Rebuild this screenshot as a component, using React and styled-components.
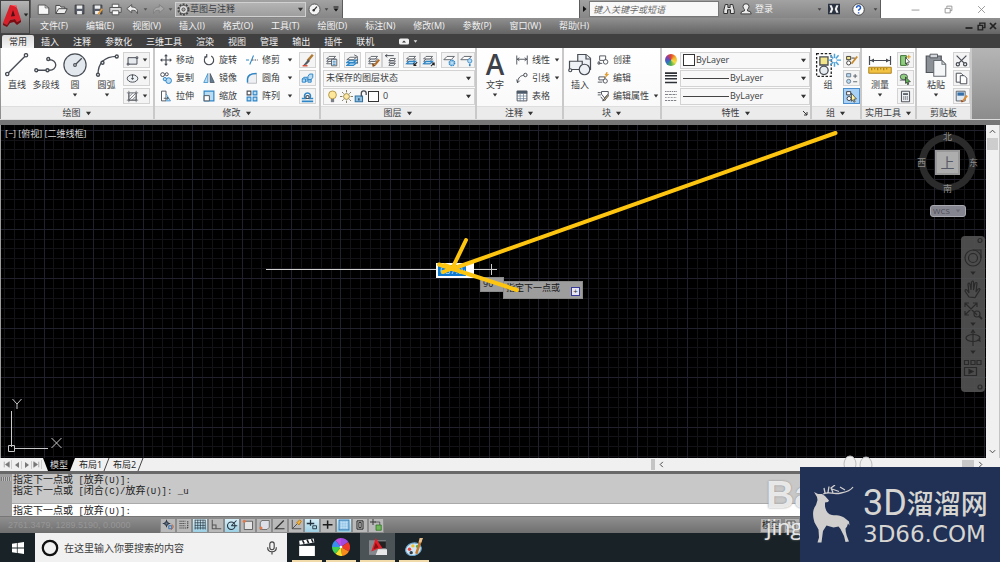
import React from "react";
import styled, { createGlobalStyle, css } from "styled-components";

const GlobalStyle = createGlobalStyle`
  *, *::before, *::after { box-sizing: border-box; }
  body { margin: 0; background: #000; }
  body, button, input, select {
    font-family: "Open Sans", "Noto Sans CJK SC", sans-serif;
    font-size: 9px;
    line-height: 12px;
  }
  button { border: 0; padding: 0; background: none; color: inherit; cursor: default; }
  svg { display: block; flex: none; }
`;

/* ---------- icons ---------- */
const K = "#484d55";
const B = "#2f86c6";
const L = "#b9dcf3";

const sheets = (
  <g fill="#fff" stroke={K}>
    <path d="M2 12l3-3h8l-3 3z" />
    <path d="M2 9l3-3h8l-3 3z" />
    <path d="M2 6l3-3h8l-3 3z" />
  </g>
);

const ICONS = {
  line: <g fill="#fff" stroke={K} strokeWidth=".9"><path d="M1.500 14L14 1.500" /><circle cx="1.500" cy="14" r="1.100" /><circle cx="14" cy="1.500" r="1.100" /></g>,
  pline: <g fill="none" stroke={K} strokeWidth=".9"><path d="M1.500 11.500h9a4 3.500 0 0 0 0-7" /><g fill="#fff"><circle cx="1.500" cy="11.500" r="1" /><circle cx="9" cy="11.500" r="1" /><circle cx="9.500" cy="4" r="1" /></g></g>,
  circle: <g fill="#e3e8ee" stroke={K} strokeWidth=".8"><circle cx="8" cy="8" r="7.400" /><path d="M8 8l4.500-4.500" /><circle cx="8" cy="8" r=".9" fill="#fff" /></g>,
  arc: <g fill="none" stroke={K} strokeWidth=".9"><path d="M2 14.500C2 7 6 2.500 14.500 2.300" /><g fill="#fff"><circle cx="2" cy="14.500" r="1" /><circle cx="5" cy="6.500" r="1" /><circle cx="14.500" cy="2.300" r="1" /></g></g>,
  rect: <g fill="#e6e9ee" stroke={K} strokeWidth="1.200"><path d="M2.500 4.500h11v8h-11z" /><path d="M1.500 11.500h2v2h-2zM12.500 3.500h2v2h-2z" fill="#fff" /></g>,
  ellipse: <g fill="#eef1f4" stroke={K} strokeWidth="1.200"><ellipse cx="8" cy="8" rx="6.500" ry="4.500" /><circle cx="8" cy="8" r="1" fill={K} /><path d="M8 3v3" /></g>,
  hatch: <g fill="none" stroke={K}><path d="M3.500 3.500h9v9h-9z" /><path d="M1 3.500h2M13 3.500h2M1 12.500h14M3.500 1v14M12.500 1v14M4 8l4-4M4 12l8-8M8 12l4-4" strokeWidth=".8" /></g>,
  move: <g stroke={K} strokeWidth="1.600" fill={K}><path d="M8 2v12M2 8h12" /><path d="M8 0l2.500 3h-5zM8 16l2.500-3h-5zM0 8l3-2.500v5zM16 8l-3-2.500v5z" stroke="none" /></g>,
  rotate: <g fill="none" stroke={K} strokeWidth="1.500"><path d="M5 2.700a6.200 6.200 0 1 0 6 0" /><path d="M5 0v4H1.500" /></g>,
  trim: <g fill="none" strokeWidth="1.400"><path d="M0 8h4M10 2L5 14" stroke={B} /><path d="M8 8h2M11.500 8h2M15 8h1" stroke={K} /></g>,
  copy: <g strokeWidth="1.300"><g fill="#fff" stroke={K}><circle cx="3.500" cy="3.500" r="2.600" /><circle cx="9" cy="3" r="2" /></g><g fill={L} stroke={B}><circle cx="11.500" cy="11.500" r="3.800" /><circle cx="6.500" cy="9.500" r="2.200" /></g></g>,
  mirror: <g strokeWidth="1"><path d="M6.500 2v12H1z" fill={L} stroke={B} /><path d="M9.500 2v12H15z" fill="#5f7d96" stroke={K} /></g>,
  fillet: <g><path d="M2 15V9q0-7 12-7v13z" fill="#eef0f3" stroke="#a9adb3" /><path d="M2 14V9q1-7 12-7" fill="none" stroke={B} strokeWidth="2" /></g>,
  stretch: <g><path d="M2 1.500h6v13H2z" fill="#fff" stroke={K} strokeWidth="1.200" /><path d="M8 5l6 9.500H8" fill={L} stroke={B} /><path d="M5 11h6M9 9l2 2-2 2" fill="none" stroke={K} strokeWidth="1.200" /></g>,
  scale: <g><path d="M1.500 1.500h13v13h-13z" fill={L} stroke={B} strokeWidth="1.600" /><path d="M1.500 7.500h7v7h-7z" fill="#fff" stroke={K} strokeWidth="1.200" /></g>,
  array: <g strokeWidth="1.500"><path d="M1.500 1.500h5v5h-5z" fill="#fff" stroke={K} /><path d="M9.500 1.500h5v5h-5zM1.500 9.500h5v5h-5zM9.500 9.500h5v5h-5z" fill={L} stroke={B} /></g>,
  brush: <g><path d="M14.500 1L8 8.500" stroke="#b07a35" strokeWidth="3" /><path d="M9 6.500l2 2-4 4.500-4.500 1z" fill="#54585f" /><path d="M2 14.500h6" stroke="#d03b25" strokeWidth="1.600" /></g>,
  explode: <g fill={L} stroke={B} strokeWidth="1.200"><path d="M1.500 8.500l2-2h4v4l-2 2h-4zM8.500 5.500l2-3h4v4l-2 3h-4zM1.500 8.500h4v4M8.500 9.500h4v3h-4z" /></g>,
  offset: <g fill="none" strokeWidth="1.400"><path d="M1 14h14M1 10.500h4c-4-9 10-9 6 0h4" stroke={B} strokeWidth="2" /><path d="M6.500 10.500c-2.500-5 5.500-5 3 0z" stroke={K} /></g>,
  layerprops: <g>{sheets}<path d="M8 6.500h6.500v8H8z" fill="#e7edf3" stroke={K} /><path d="M9.500 9h3.500M9.500 11h3.500M9.500 13h3.500" stroke={B} /></g>,
  layerblue: <g fill={L} stroke={K}><path d="M1 14l4-3h8l-4 3zM1 10.500l4-3h8l-4 3z" stroke={B} strokeWidth="1.500" /><path d="M1 7l4-3h8l-4 3z" fill="#fff" /><path d="M10 1l4 2v9" fill="none" /></g>,
  layermatch: <g>{sheets}<path d="M15 7l-5 6" stroke="#b46a20" strokeWidth="2.500" /><path d="M6 11l5 3-4 2z" fill="#8a4c14" /></g>,
  layerprev: <g><g fill="#fff" stroke={K}><path d="M6 14l2-2.500h6L12 14zM6 11l2-2.500h6L12 11zM6 8l2-2.500h6L12 8z" /></g><path d="M12 2H2M4 .5L1.500 2 4 4" fill="none" stroke={K} strokeWidth="1.200" /></g>,
  layeriso: <g>{sheets}<path d="M2 12l3-3h8l-3 3z" fill={L} stroke={B} strokeWidth="1.500" /><path d="M15 10l-4 4M11 11v3h3" stroke="#222" fill="none" strokeWidth="1.300" /></g>,
  layeruniso: <g>{sheets}<path d="M2 12l3-3h8l-3 3z" fill={L} stroke={B} strokeWidth="1.500" /><path d="M11 15l4-4M12 11h3v3" stroke="#222" fill="none" strokeWidth="1.300" /></g>,
  layerfreeze: <g><path d="M1 7l4-4h9l-4 4z" fill="#fff" stroke={K} /><circle cx="11" cy="11" r="3.200" fill={L} stroke={B} strokeWidth="2" strokeDasharray="1.700 .8" /></g>,
  layeroff: <g><path d="M1 7l4-4h9l-4 4z" fill="#fff" stroke={K} /><circle cx="12" cy="8.500" r="2.600" fill={L} stroke={B} /><path d="M11 12h2v3h-2z" fill={B} /></g>,
  bulb: <g><circle cx="8" cy="6" r="4.800" fill="#fde79a" stroke="#a98a32" /><path d="M6 11h4v4H6z" fill="#7b7f86" /></g>,
  sun: <g><circle cx="8" cy="8" r="3.600" fill="#fbe7a0" stroke="#8d7a3e" /><path d="M8 0v3M8 13v3M0 8h3M13 8h3M2.500 2.500l2 2M11.500 11.500l2 2M13.500 2.500l-2 2M4.500 11.500l-2 2" stroke="#6d6243" /></g>,
  lock: <g><path d="M1.500 7.500h9v7h-9z" fill="#8cc0e4" stroke="#2c6f9e" strokeWidth="1.300" /><path d="M9 8V4q0-3 3-3t3 3v2" fill="none" stroke={K} strokeWidth="1.600" /><path d="M6 10v3" stroke="#234" strokeWidth="1.500" /></g>,
  linear: <g fill="none" stroke={K} strokeWidth="1.200"><path d="M1 2v12M15 2v12M1.500 7h13" /><path d="M4.500 5L1.500 7l3 2M11.500 5l3 2-3 2" /></g>,
  leader: <g fill="none" stroke={K} strokeWidth="1.300"><path d="M2 14C3 7 6 5 10 4.500" /><circle cx="12.500" cy="4" r="2.300" /><path d="M1 10l1 4.500 3-3" /></g>,
  table: <g><path d="M1.500 1.500h13v13h-13z" fill="#fff" stroke={K} strokeWidth="1.200" /><path d="M1 1h14v4H1z" fill="#4d5a6a" /><path d="M1 8h14M1 11.500h14M5.500 5v10M10 5v10" stroke="#6f8399" /></g>,
  insert: <g fill="#eef1f5" stroke={K} strokeWidth=".8"><path d="M6.500 1H12l3 2.500V11H6.500z" /><path d="M12 1v3h3" /><path d="M1 5.500h8.500V11H1z" /><circle cx="11" cy="11" r="3.500" /><circle cx="1.500" cy="11.500" r="1" fill="#fff" /></g>,
  create: <g fill="#fff" stroke={K} strokeWidth="1.200"><path d="M3.500 2.500h8v6h-8zM1 12.500h6" /><circle cx="11.500" cy="10.500" r="3" /><path d="M1.500 10.500h2v3h-2z" /></g>,
  editblk: <g fill="#fff" stroke={K} strokeWidth="1.200"><path d="M2.500 6.500h8v4h-8zM1 13.500h6" /><circle cx="11" cy="12" r="2.800" /><path d="M13.500 0l-3 4h2l-2 4 5-5h-2.500z" fill="#f6a623" stroke="#c97c0c" strokeWidth=".6" /></g>,
  attr: <g fill="#fff" stroke={K} strokeWidth="1.200"><path d="M1 3.500h4M1 6.500h4M6 2h9v3.500l-5 5-4-5z" /><path d="M5 9l3 4h4" fill="none" /><path d="M14.500 6L9 12.500l-1.500 2 3-1 5-6z" fill="#e8c173" /></g>,
  lweight: <path d="M0 1.500h16M0 5h16M0 9h16M0 14h16" stroke="#2e3136" strokeWidth="2.200" />,
  ltype: <g stroke="#555a61"><path d="M0 2h16" strokeDasharray="2 1" /><path d="M0 6h16" strokeDasharray="4 1" /><path d="M0 10h16" strokeDasharray="1 1" /><path d="M0 14h16" strokeDasharray="3 1" /></g>,
  group: <g><path d="M1 1h9v14H1z" fill="none" stroke="#222" strokeDasharray="1.500 1" strokeWidth=".8" /><path d="M3 3h5v5H3z" fill="#f3e58a" stroke={K} strokeWidth=".8" /><circle cx="5.500" cy="11.300" r="2.600" fill="#e8edf2" stroke={K} strokeWidth=".8" /><path d="M12 1v8M8.500 5h7.500M9.500 2l5 6M14.500 2l-5 6" stroke="#4fa3d8" strokeWidth=".9" /><circle cx="12" cy="5" r="1.300" fill="#fff" /></g>,
  g1: <g><path d="M2 3h5v4H2z" fill="#f3e58a" stroke="#222" /><circle cx="4.500" cy="11" r="2.500" fill="#fff" stroke="#222" /><path d="M8 12L15 3" stroke="#c98a28" strokeWidth="2.200" /><path d="M8 5h4" stroke="#222" /></g>,
  g2: <g fill={L} stroke="#5b6d7e"><path d="M2 2h5v4H2z" /><circle cx="4.500" cy="11.500" r="2.500" /><path d="M10 5h5M12.500 2.500v5M10 12h5" stroke={K} /></g>,
  g3: <g><path d="M2 2h5v4H2z" fill="#fff" stroke="#222" /><circle cx="5" cy="10.500" r="2.500" fill="#fff" stroke="#222" /><path d="M8 4l6 7-3 .3 1.500 3-1.500.7-1.300-3L8 14z" fill="#fff3a0" stroke="#222" strokeWidth=".8" /></g>,
  measure: <g><path d="M1 2v6M15 2v6M1 5h14" stroke={K} strokeWidth=".8" /><path d="M1.500 5l2.500-1.300v2.600zM14.500 5L12 3.700v2.600z" fill={K} /><path d="M.5 9.500h15v4H.5z" fill="#f2c243" stroke="#a57a14" strokeWidth=".6" /><path d="M2.500 10v1.500M4.500 10v1M6.500 10v1.500M8.500 10v1M10.500 10v1.500M12.500 10v1" stroke="#7b5a0c" strokeWidth=".5" /></g>,
  qselect: <g><path d="M2 2h7v12H2z" fill="#8fce7f" stroke="#3b6e30" strokeWidth="1.200" /><path d="M8 4l5 6-2.500.3 1 3-1.500.5-1-3L8 12z" fill="#fff" stroke="#222" strokeWidth=".8" /><path d="M12 1v5M9.500 3.500h5" stroke="#d69a28" strokeWidth="1.200" /></g>,
  selsim: <g><ellipse cx="6" cy="6" rx="4.500" ry="3.500" fill="#8fce7f" stroke={K} /><path d="M1 10h9" stroke={K} /><path d="M8 6l6 6-3 .3 1 2.700-1.500.6-1-3L8 14z" fill="#5fae55" stroke="#222" strokeWidth=".8" /></g>,
  calc: <g><path d="M3 1.500h10v13H3z" fill="#eceef1" stroke={K} strokeWidth="1.200" /><path d="M5 4h6v2H5z" fill={K} /><path d="M5 8.500h6M5 11h6" stroke={K} strokeDasharray="1.500 .8" strokeWidth="1.300" /></g>,
  paste: <g><path d="M1.500 2h10v11h-10z" fill="#8b8f96" stroke="#50545b" strokeWidth=".8" /><path d="M4 .8h5v2.400H4z" fill="#d5d8dc" stroke="#50545b" strokeWidth=".6" /><path d="M6.500 5H12l2.500 2.500v8h-8z" fill="#f5f6f8" stroke="#666b73" strokeWidth=".7" /><path d="M12 5v2.500h2.500" fill="none" stroke="#666b73" strokeWidth=".7" /></g>,
  cut: <g fill="none" stroke={K} strokeWidth="1.500"><path d="M2 2l9 9M14 2l-9 9" /><circle cx="3.500" cy="12.500" r="2" /><circle cx="12.500" cy="12.500" r="2" /></g>,
  copyclip: <g fill="#fff" stroke={K} strokeWidth="1.200"><path d="M1.500 1.500h6l2 2v9h-8z" /><path d="M6.500 4.500h5l3 3v7h-8z" /></g>,
  matchprop: <g><path d="M1.500 1.500h11v12h-11z" fill="#dfe9f3" stroke={K} /><path d="M3 3h8v4H3z" fill="#356fa8" /><path d="M15 7l-5 6" stroke="#e08a2a" strokeWidth="2.200" /><path d="M7 12l4 2-3 1.500z" fill="#a34b12" /></g>,
  newdoc: <g><path d="M1.500 2.500H10l4.500 3.500v8h-13z" fill="#f7f7f7" stroke="#555" strokeWidth="1.200" /><path d="M10 2.500V6h4.500" fill="none" stroke="#555" /></g>,
  open: <g fill="#eee" stroke="#444" strokeWidth="1.200"><path d="M1 13V3h5l1.500 2H12v2" /><path d="M1 13l3.500-6H15l-3 6z" /></g>,
  save: <g><path d="M1.500 1.500h13v13h-13z" fill="#565d69" stroke="#333" /><path d="M4 2h8v5H4zM4.500 10h7v5h-7z" fill="#eee" /></g>,
  saveas: <g><path d="M1.500 1.500h13v13h-13z" fill="#565d69" stroke="#333" /><path d="M4 2h8v5H4zM4.500 10h7v5h-7z" fill="#eee" /><path d="M15 7l-6 8" stroke="#e49a34" strokeWidth="2.500" /></g>,
  print: <g stroke="#444"><path d="M4 1.500h8v4H4z" fill="#fff" /><path d="M1 5.500h14v6H1z" fill="#d7d7d7" /><path d="M4 9.500h8v5H4z" fill="#fff" /></g>,
  undo: <path d="M7 2L1 7l6 5V9c4-.5 6 1 7 4 1-5-2-8-7-8z" fill="#eee" stroke="#444" />,
  redo: <path d="M9 2l6 5-6 5V9c-4-.5-6 1-7 4-1-5 2-8 7-8z" fill="#a9a9a9" stroke="#7c7c7c" />,
  gear: <g fill="none" stroke="#444"><circle cx="8" cy="8" r="6.500" strokeWidth="2" strokeDasharray="2.500 1.600" /><circle cx="8" cy="8" r="5" fill="#ddd" /><circle cx="8" cy="8" r="2" fill="#aaa" /></g>,
  gauge: <g><circle cx="8" cy="8" r="6.800" fill="#f3f3f3" stroke="#555" strokeWidth="1.200" /><path d="M7 9l4-4.500" stroke="#333" strokeWidth="1.600" /><circle cx="7" cy="9" r="1.500" fill="#333" /></g>,
  eject: <path d="M3 3h10v2H3zM3 7h10l-5 6z" fill="#111" />,
  expand: <path d="M4 2v12l7-6z" fill="#111" />,
  binoc: <g fill="#e4e4e4" stroke="#2f2f2f" strokeWidth="1.300"><path d="M3 2h3.500v4h3V2H13l2 8v4h-5V9H6v5H1v-4z" /></g>,
  person: <g fill="#eee" stroke="#333" strokeWidth="1.200"><path d="M1 14.500q0-4 5-4v-2Q4 7 4 4.500 4 1 8 1t4 3.500Q12 7 10 8.500v2q5 0 5 4z" /></g>,
  exchange: <g><path d="M0 1h16v14H0z" fill="#2b3340" /><path d="M2 3h3l2 5-2 5H2l2-5zM14 3h-3L9 8l2 5h3l-2-5z" fill="#eee" /></g>,
  restore: <g fill="none" stroke="currentColor" strokeWidth="1.500"><path d="M2 6h9v8H2z" /><path d="M5 5V2h9v8h-3" /></g>,
  close: <path d="M2 2l12 12M14 2L2 14" stroke="currentColor" strokeWidth="1.500" />,
  min: <path d="M1 9h14" stroke="currentColor" strokeWidth="1.500" />,
  restoreBold: <g fill="none" stroke="currentColor" strokeWidth="2.500"><path d="M2 6h8v8H2z" /><path d="M5 5V2h9v8h-3" /></g>,
  closeBold: <path d="M2 2l12 12M14 2L2 14" stroke="currentColor" strokeWidth="3.500" />,
  minBold: <path d="M1 12h14" stroke="currentColor" strokeWidth="3.500" />,
  first: <path d="M4 3v10M13 3v10L6 8z" fill="#777" stroke="#777" />,
  prev: <path d="M12 2v12L4 8z" fill="#777" />,
  next: <path d="M4 2v12l8-6z" fill="#777" />,
  last: <path d="M12 3v10M3 3v10l7-5z" fill="#777" stroke="#777" />,
  chevL: <path d="M11 2L5 8l6 6" fill="none" stroke="#444" strokeWidth="2.200" />,
  chevR: <path d="M5 2l6 6-6 6" fill="none" stroke="#444" strokeWidth="2.200" />,
  chevU: <path d="M2 11l6-6 6 6" fill="none" stroke="#444" strokeWidth="2.200" />,
  chevD: <path d="M2 5l6 6 6-6" fill="none" stroke="#444" strokeWidth="2.200" />,
  s1: <g fill="none" stroke="#2e3a48" strokeWidth="1.300"><path d="M6 1v10M1 6h10" /><path d="M4 4h4v4H4z" fill="#69788a" /><path d="M9 9h4v4H9z" stroke="#356fb0" /><path d="M13 7c3 2 2 6-1 7" stroke="#c2562d" /></g>,
  s2: <path d="M2 3h8M2 6h8M2 9h8M2 12h11M13 3v9" stroke="#3a3a3a" strokeWidth="1.500" strokeDasharray="1.500 1" />,
  s3: <path d="M1 1.500h14M1 5h14M1 8.500h14M1 12h14M1.500 1v13M5 1v13M8.500 1v13M12 1v13M15 1v13" stroke="#23313c" strokeWidth=".9" />,
  s4: <path d="M3 1v12h12M3 8h5v5" fill="none" stroke="#555" strokeWidth="1.400" />,
  s5: <g fill="none" stroke="#23313c" strokeWidth="1.400"><circle cx="7" cy="9" r="5" /><path d="M7 9l7-7M7 9h8" /></g>,
  s6: <g><path d="M3 3h11v11H3z" fill="#e4e4e4" stroke="#444" /><circle cx="3" cy="3" r="2" fill="#e07a4a" /></g>,
  s7: <g><path d="M5 2h10v9l-3 3H3V5z" fill="#dcdfe8" stroke="#555" /><circle cx="4" cy="12" r="2" fill="#e07a4a" /></g>,
  s8: <path d="M13 2L2 13h12" fill="none" stroke="#333" strokeWidth="1.600" />,
  s9: <g fill="none" stroke="#444" strokeWidth="1.200"><path d="M3 1v12h12M3 13l7-7" /><path d="M13 1l-4 4 3 3 3-5z" fill="#f1b33c" stroke="#b87814" /></g>,
  s10: <g stroke="#23313c" strokeWidth="1.700" fill="none"><path d="M1 6h10M6 1v8" /><path d="M9 9h5v4H9z" strokeWidth="1.200" /></g>,
  s11: <path d="M1 7.500h13M7.500 2v11" stroke="#1d1d1d" strokeWidth="2" />,
  s12: <g><path d="M1.500 1.500h13v13h-13z" fill="#cbe4f6" stroke="#3d84bd" strokeWidth="1.500" /><path d="M3 3h10v10H3z" fill="#7db8e2" /><path d="M3 5h10M3 8h10M3 11h10M5 3v10M8 3v10M11 3v10" stroke="#cfe7f7" /></g>,
  s13: <path d="M4 2.500h8v11H4zM6.500 4.500h3v7h-3z" fill="#ccc" stroke="#222" strokeWidth="1.300" />,
  s14: <g><path d="M4 0v8M0 4h8" stroke="#333" strokeWidth="1.300" /><path d="M6 4h7v4" fill="none" stroke="#444" /><path d="M8 8h7v7H8z" fill="#6fb758" stroke="#2f6f22" /></g>,
  win: <path d="M0 2.300l6.500-.9v6H0zM7.500 1.200L16 0v7.400H7.500zM0 8.500h6.500v6.100L0 13.700zM7.500 8.500H16V16l-8.500-1.200z" fill="#fff" />,
  ring: <circle cx="8" cy="8" r="6.400" fill="none" stroke="#111" strokeWidth="2" />,
  mic: <g fill="none" stroke="#444" strokeWidth="1.300"><rect x="5.500" y="1" width="5" height="9" rx="2.500" /><path d="M3 7c0 7 10 7 10 0M8 12.500V15.500" /></g>,
  clap: <g fill="#fff"><path d="M1 7h14v9H1z" /><path d="M1 2.500l13-2 .5 3.500-13 2z" /><path d="M4 2l1.500 3M8 1.500L9.500 4.500M12 1l1.500 3" stroke="#1a2227" strokeWidth="1.400" /></g>,
  pin: <g><path d="M8 8V0a8 8 0 0 1 6.500 3.500z" fill="#a24be0" /><path d="M8 8l6.500-4.500A8 8 0 0 1 15 12z" fill="#ef3a2a" /><path d="M8 8l7 4a8 8 0 0 1-6 4z" fill="#f98b1c" /><path d="M8 8l1 8a8 8 0 0 1-6-2z" fill="#f7df2b" /><path d="M8 8l-5 6a8 8 0 0 1-3-6z" fill="#3fcf55" /><path d="M8 8H0a8 8 0 0 1 3-6z" fill="#3a8dee" /><path d="M8 8L3 2a8 8 0 0 1 5-2z" fill="#c04be6" /><circle cx="8" cy="8" r="1.200" fill="#fff" /></g>,
  cad: <g><path d="M0 2h15v13H0z" fill="#85898d" /><path d="M8 3h7v6H8z" fill="#222" /><path d="M8 10h8v5H6z" fill="#e8e8e8" /><path d="M6 0l6 9-4 .5L2 12z" fill="#e0202a" /><path d="M6 4l2.500 4.500L4 10z" fill="#8d0f14" /></g>,
  paint: <g><ellipse cx="7.500" cy="10" rx="7" ry="5.500" fill="#cfe7f6" stroke="#6fa6cc" transform="rotate(-15 7.500 10)" /><circle cx="4" cy="10" r="1.500" fill="#e8443a" /><circle cx="7" cy="7" r="1.500" fill="#f2c230" /><circle cx="5.500" cy="13" r="1.500" fill="#333b47" /><circle cx="11" cy="7.500" r="1.300" fill="#45b24e" /><path d="M14 2L10 14" stroke="#c77a2c" strokeWidth="2.200" /><path d="M13 0h3l-1.500 4H12z" fill="#e9c08a" /></g>,
};

const Icon = ({ n, s = 12, w, h }) => (
  <svg width={w || s} height={h || s} viewBox="0 0 16 16" aria-hidden="true">{ICONS[n]}</svg>
);
const Caret = ({ c = "#333", s = 6 }) => (
  <svg width={s} height={s} viewBox="0 0 6 6" aria-hidden="true"><path d="M.8 1.600h4.400L3 4.600z" fill={c} /></svg>
);

/* ---------- frame ---------- */
const Shell = styled.div`
  position: relative;
  display: flex;
  flex-direction: column;
  min-height: 100vh;
  overflow: hidden;
  color: #3b3d41;
`;
const Header = styled.header`
  display: flex;
  background: #7a7a7a;
`;
const AppButton = styled.button`
  width: 30px;
  display: flex;
  align-items: center;
  gap: 1px;
  padding: 0 0 4px 2px;
  border: 1px solid #444;
  background: linear-gradient(#b5b5b5, #6a6a6a);
`;
const HeaderRows = styled.div`flex: 1; min-width: 0;`;
const TitleRow = styled.div`
  display: flex;
  justify-content: space-between;
  height: 18px;
  background: #fff;
`;
const TitleBox = styled.div`
  display: flex;
  align-items: center;
  width: ${(p) => p.$w}px;
  padding-left: ${(p) => p.$pl || 0}px;
  background: linear-gradient(#a2a2a2, #868686);
  border: solid #5c5c5c;
  border-width: 0 1px;
`;
const TinyButton = styled.button`
  display: flex;
  align-items: center;
  justify-content: center;
  flex: none;
  width: ${(p) => p.$w || 12}px;
  height: 14px;
`;
const WorkspacePick = styled.label`
  position: relative;
  display: flex;
  align-items: center;
  width: 131px;
  height: 15px;
  padding-left: 1px;
  border: 1px solid #d0d0d0;
  background: linear-gradient(#b4b4b4, #9e9e9e);
  & > svg:last-child { position: absolute; right: 1px; top: 3px; pointer-events: none; }
`;
const PlainSelect = styled.select`
  appearance: none;
  flex: 1;
  min-width: 0;
  border: 0;
  padding: 0 0 0 ${(p) => p.$indent || 0}px;
  background: none;
  color: inherit;
  outline: 0;
`;
const SearchInput = styled.input`
  width: 130px;
  height: 16px;
  padding: 0 3px;
  border: 1px solid #777;
  background: #f8f8f8;
  font-style: italic;
  border-radius: 0;
  &::placeholder { color: #6a6a6a; opacity: 1; }
`;
const Login = styled.button`
  display: flex;
  align-items: center;
  color: #f4f4f4;
  flex: 1;
  margin-left: 2px;
`;
const WindowControls = styled.div`
  display: flex;
  align-items: center;
  justify-content: space-around;
  width: 119px;
  padding: 0 2px 0 18px;
  color: #8b8b8b;
`;
const TitleGap = styled.div`flex: 1;`;
const MenuBar = styled.nav`
  display: flex;
  align-items: center;
  height: 16px;
  padding: 0 1px 0 10px;
  gap: 18px;
  background: linear-gradient(#909090, #646464);
  color: #f2f2f2;
`;
const MdiControls = styled.div`
  display: flex;
  margin-left: auto;
  color: #222;
`;
const TabBar = styled.div`
  display: flex;
  align-items: flex-end;
  height: 14px;
  padding-left: 2px;
  background: #404040;
  color: #f0f0f0;
`;
const RibbonTab = styled.button`
  padding: 0 7px;
  height: 13px;
  line-height: 13px;
  border-radius: 2px 2px 0 0;
  ${(p) => p.$active && css`background: linear-gradient(#dcdcdc, #f6f6f6); color: #333;`}
`;
const TabToggle = styled.button`
  display: flex;
  align-items: center;
  gap: 4px;
  height: 13px;
  margin-left: 18px;
`;

/* ---------- ribbon ---------- */
const Ribbon = styled.div`
  display: flex;
  padding-left: 1px;
  background: linear-gradient(#b5b5b5, #8c8c8c);
  border-bottom: 1px solid #dcdcdc;
`;
const PanelBox = styled.section`
  display: flex;
  flex-direction: column;
  flex: none;
  width: ${(p) => p.$w}px;
  border-right: 2px solid #c9c9c9;
  background: linear-gradient(#fff, #f8f8f8);
`;
const PanelBody = styled.div`
  display: flex;
  padding: 3px 0 1px ${(p) => p.$pl || 0}px;
  gap: ${(p) => p.$gap || 0}px;
  height: 58px;
`;
const PanelTitle = styled.h2`
  position: relative;
  display: flex;
  align-items: center;
  justify-content: center;
  gap: 4px;
  height: 13px;
  margin: 0;
  background: #ebebeb;
  border-top: 1px solid #dedede;
  font-size: 9px;
  font-weight: 400;
  white-space: nowrap;
`;
const Launcher = styled.button`
  position: absolute;
  right: 2px;
  top: 3px;
`;
const Big = styled.button`
  display: flex;
  flex-direction: column;
  align-items: center;
  justify-content: flex-start;
  flex: none;
  width: ${(p) => p.$w}px;
  white-space: nowrap;
`;
const BigIcon = styled.span`
  display: flex;
  align-items: center;
  justify-content: center;
  height: 27px;
`;
const BigLabel = styled.span`line-height: 14px;`;
const BigLetter = styled.span`
  font: 600 28px/27px "Open Sans", sans-serif;
  color: #3d4149;
`;
const Stack = styled.div`
  display: grid;
  grid-template-rows: repeat(3, 18px);
  align-items: center;
  justify-items: ${(p) => (p.$end ? "end" : "stretch")};
  flex: none;
  width: ${(p) => p.$w}px;
`;
const Tool = styled.button`
  display: flex;
  align-items: center;
  gap: 4px;
  text-align: left;
  white-space: nowrap;
  & > svg + span + svg { margin-left: auto; }
`;
const Framed = styled.button`
  display: flex;
  align-items: center;
  justify-content: space-around;
  width: ${(p) => p.$w || 17}px;
  height: 16px;
  border: 1px solid ${(p) => (p.$on ? "#4b8fd0" : "#d3d3d3")};
  background: ${(p) => (p.$on ? "#a9d0f5" : "#f4f4f4")};
`;
const FramedRow = styled.div`
  display: flex;
  justify-content: space-between;
  & > div { display: flex; }
`;
const Combo = styled.label`
  position: relative;
  display: flex;
  align-items: center;
  gap: 1px;
  flex: 1;
  min-width: 0;
  height: 17px;
  padding-left: 2px;
  border: 1px solid #d3d3d3;
  background: #f8f8f8;
  & > svg:last-child { position: absolute; right: 2px; top: 4px; pointer-events: none; }
`;
const ComboRow = styled.div`
  display: flex;
  align-items: center;
  gap: 3px;
`;
const Swatch = styled.span`
  flex: none;
  width: ${(p) => p.$s}px;
  height: ${(p) => p.$s}px;
  border: 1px solid #333;
  background: #fff;
`;
const LineSample = styled.span`
  flex: none;
  width: 46px;
  height: 1px;
  background: #444;
`;
const Wheel = styled.span`
  width: 12px;
  height: 12px;
  border-radius: 50%;
  background: conic-gradient(#e2452f, #f0b429, #f3e04a, #4db04a, #2f6fc4, #7a3fb0, #e2452f);
`;

/* ---------- drawing area ---------- */
const Workspace = styled.main`
  display: flex;
  flex: 1;
  border-top: 5px solid #767676;
`;
const Drawing = styled.div`
  position: relative;
  flex: 1;
  min-width: 0;
  min-height: 320px;
  background: #000;
  border-left: 1px solid #9a9a9a;
  overflow: hidden;
  & > svg { position: absolute; left: 0; top: 0; }
`;
const ViewLabel = styled.div`
  position: absolute;
  left: 4px;
  top: 3px;
  color: #d8d8d8;
  white-space: pre;
`;
const DynInput = styled.input`
  position: absolute;
  left: 435px;
  top: 138px;
  width: 38px;
  height: 15px;
  padding: 0 7px 0 2px;
  border: 2px solid #fff;
  border-radius: 0;
  background: linear-gradient(90deg, #0c78d2 28px, #fff 28px);
  color: #bfe0f7;
`;
const Tip = styled.div`
  position: absolute;
  left: ${(p) => p.$x}px;
  top: ${(p) => p.$y}px;
  display: flex;
  align-items: flex-start;
  justify-content: space-between;
  width: ${(p) => p.$w}px;
  height: ${(p) => p.$h}px;
  padding: 0 2px;
  border: 1px solid #8a8a8a;
  background: #9d9d9d;
  color: #161616;
  white-space: nowrap;
`;
const MenuHint = styled.span`
  width: 9px;
  height: 9px;
  margin-top: 5px;
  border: 1px solid #3a3a9a;
  background: #e6e6f4;
  color: #222;
  font-size: 8px;
  line-height: 6px;
  text-align: center;
`;
const ViewCube = styled.div`
  position: absolute;
  right: 2px;
  top: 1px;
  display: grid;
  grid-template-columns: 21px 31px 21px;
  grid-template-rows: 21px 31px 21px;
  place-items: center;
  color: #8c8c8c;
  &::before {
    content: "";
    position: absolute;
    inset: 8px;
    border: 7px solid #2b2b2b;
    border-radius: 50%;
  }
  & > * { position: relative; }
`;
const CubeFace = styled.button`
  width: 25px;
  height: 25px;
  border: 2px solid #989898;
  background: #adadad;
  color: #565a66;
  font-size: 14px;
  line-height: 18px;
`;
const Wcs = styled.button`
  position: absolute;
  right: 20px;
  top: 80px;
  display: flex;
  align-items: center;
  justify-content: space-between;
  width: 36px;
  height: 12px;
  padding: 0 4px 0 2px;
  border: 1px solid #a9a9b2;
  border-radius: 3px;
  background: #85858f;
  color: #4c4c56;
  font-size: 8px;
`;
const NavBar = styled.div`
  position: absolute;
  right: 1px;
  top: 111px;
  width: 24px;
  border-radius: 4px;
  background: rgba(88, 88, 88, 0.85);
`;
const VScroll = styled.div`
  display: flex;
  flex-direction: column;
  align-items: center;
  justify-content: space-between;
  width: 14px;
  background: #f0f0f0;
  border-right: 1px solid #c4c4c4;
`;
const VThumb = styled.div`
  width: 11px;
  height: 12px;
  background: #cdcdcd;
  margin-bottom: auto;
`;
const ScrollButton = styled.button`
  display: flex;
  align-items: center;
  justify-content: center;
  width: 13px;
  height: 13px;
`;

/* ---------- layout tabs and command line ---------- */
const LayoutBar = styled.div`
  display: flex;
  align-items: center;
  height: 13px;
  padding-left: 2px;
  background: #f0f0f0;
  color: #222;
`;
const LayoutNav = styled.button`
  display: flex;
  justify-content: center;
  width: 10px;
  border-right: 1px solid #ccc;
`;
const LayoutTab = styled.button`
  position: relative;
  display: flex;
  align-items: center;
  width: 34px;
  height: 13px;
  padding-left: ${(p) => (p.$active ? 8 : 3)}px;
  white-space: nowrap;
  color: ${(p) => (p.$active ? "#d8d8d8" : "#222")};
  & > svg { position: absolute; left: 0; top: 0; }
  & > span { position: relative; }
`;
const HScroll = styled.div`
  display: flex;
  align-items: center;
  justify-content: space-between;
  width: 349px;
  margin-left: auto;
  padding-right: 13px;
`;
const Splitter = styled.div`
  width: 4px;
  height: 11px;
  background: #c4c4c4;
`;
const HThumb = styled.div`
  width: 12px;
  height: 9px;
  margin-left: auto;
  background: #c8c8c8;
`;
const Command = styled.section`
  display: grid;
  grid-template-columns: 12px 1fr;
  border-top: 3px solid #686868;
  border-bottom: 1px solid #777;
  color: #1c1c1c;
  font-size: 10px;
`;
const Grip = styled.div`
  grid-row: span 2;
  padding: 3px 1px;
  background: #9d9d9d;
  &::before {
    content: "";
    display: block;
    height: 4px;
    background: repeating-linear-gradient(90deg, #777 0 1px, #bbb 1px 2px);
  }
`;
const History = styled.div`
  height: 30px;
  padding-left: 1px;
  background: #c8c8c8;
  border-bottom: 1px solid #aaa;
`;
const Line = styled.div`
  height: 11px;
  line-height: 11px;
  white-space: pre;
`;
const Code = styled.span`
  font-family: "Liberation Mono", monospace;
  font-size: 9px;
  line-height: 9px;
`;
const Prompt = styled.label`
  display: flex;
  align-items: center;
  height: 12px;
  padding-left: 1px;
  background: #fff;
  white-space: pre;
`;
const PromptInput = styled.input`
  flex: 1;
  height: 11px;
  padding: 0 4px;
  border: 0;
  outline: 0;
  background: none;
`;

/* ---------- status bar and taskbar ---------- */
const Status = styled.div`
  display: flex;
  align-items: center;
  height: 16px;
  background: linear-gradient(#8f8f8f, #6f6f6f);
`;
const Coords = styled.output`
  width: 160px;
  padding-left: 8px;
  color: #969696;
  font-family: "Liberation Sans", sans-serif;
`;
const StatusToggle = styled.button`
  display: flex;
  align-items: center;
  justify-content: center;
  width: 16px;
  height: 15px;
  border: 1px solid #8d8d8d;
  background: ${(p) => (p.$on ? "linear-gradient(#d6eef8, #9ccfe3)" : "#b9b9b9")};
`;
const ModelButtons = styled.div`
  display: flex;
  gap: 2px;
  margin-left: auto;
  margin-right: 200px;
  color: #222;
`;
const ModelButton = styled.button`
  width: ${(p) => p.$w}px;
  height: 15px;
  border: 1px solid #888;
  background: #b4b4b4;
  white-space: nowrap;
`;
const Taskbar = styled.footer`
  display: flex;
  height: 29px;
  background: #192226;
`;
const Start = styled.button`
  display: flex;
  align-items: center;
  justify-content: center;
  width: 35px;
`;
const TaskSearch = styled.label`
  display: flex;
  align-items: center;
  width: 252px;
  padding: 0 8px 0 6px;
  background: #f1f1f1;
`;
const TaskSearchInput = styled.input`
  flex: 1;
  min-width: 0;
  padding: 0 0 0 5px;
  border: 0;
  background: none;
  font-size: 10px;
  line-height: 14px;
  &::placeholder { color: #3c3c3c; opacity: 1; }
`;
const TaskApps = styled.div`
  display: flex;
  gap: 4px;
  padding-left: 5px;
`;
const TaskApp = styled.button`
  display: flex;
  align-items: center;
  justify-content: center;
  width: ${(p) => (p.$active ? 35 : 30)}px;
  border-bottom: 2px solid #f2dbab;
  background: ${(p) => (p.$active ? "#4b5357" : "none")};
`;

/* ---------- site marks over the corner ---------- */
const FaintMark = styled.div`
  position: absolute;
  right: 0;
  bottom: ${(p) => p.$b}px;
  width: ${(p) => p.$w}px;
  color: rgba(245, 245, 245, 0.9);
  font: ${(p) => p.$font};
  text-shadow: 0 0 2px #888;
`;
const Paw = styled.svg`
  position: absolute;
  right: 126px;
  bottom: 90px;
`;
const Brand = styled.aside`
  position: absolute;
  right: 0;
  bottom: 0;
  display: flex;
  align-items: center;
  gap: 8px;
  width: 200px;
  height: 95px;
  padding-left: 12px;
  background: #213055;
  color: #d6d5d2;
`;
const BrandText = styled.div`
  display: flex;
  flex-direction: column;
  white-space: nowrap;
`;
const BrandName = styled.strong`
  display: flex;
  align-items: center;
  height: 38px;
  font: 500 27px/36px "Noto Sans CJK SC", sans-serif;
`;
const BrandLatin = styled.span`
  font: 400 36px/36px Roboto, sans-serif;
`;
const BrandUrl = styled.span`
  font: 400 23px/24px "DejaVu Sans", sans-serif;
`;

/* ---------- pieces ---------- */
const BigTool = ({ icon, label, w, caret, s = 22, letter }) => (
  <Big $w={w}>
    <BigIcon>{letter ? <BigLetter>{letter}</BigLetter> : <Icon n={icon} s={s} />}</BigIcon>
    <BigLabel>{label}</BigLabel>
    {caret && <Caret />}
  </Big>
);
const SmallTool = ({ icon, label, caret }) => (
  <Tool><Icon n={icon} /><span>{label}</span>{caret && <Caret />}</Tool>
);
const FrameTool = ({ icon, name, on, w, caret }) => (
  <Framed aria-label={name} $on={on} $w={w}><Icon n={icon} s={13} />{caret && <Caret />}</Framed>
);
const Panel = ({ title, w, pl, gap, plain, launcher, children }) => (
  <PanelBox $w={w}>
    <PanelBody $pl={pl} $gap={gap}>{children}</PanelBody>
    <PanelTitle>
      {title}{!plain && <Caret s={7} />}
      {launcher && <Launcher aria-label="特性面板"><svg width="6" height="6" viewBox="0 0 6 6"><path d="M1 1l4 4M5 2v3H2" fill="none" stroke="#333" /></svg></Launcher>}
    </PanelTitle>
  </PanelBox>
);

const STEP = 49.48;
const gridPath = (major) => {
  let d = "";
  for (let i = -5; i < 200; i++) {
    if ((i % 5 === 0) !== major) continue;
    const x = Math.round(42.6 + (i * STEP) / 5) + 0.5;
    const y = Math.round(4.7 + (i * STEP) / 5) + 0.5;
    d += `M${x} 0V1200M0 ${y}H2000`;
  }
  return d;
};
const MINOR = gridPath(false);
const MAJOR = gridPath(true);

const menus = ["文件(F)", "编辑(E)", "视图(V)", "插入(I)", "格式(O)", "工具(T)", "绘图(D)", "标注(N)", "修改(M)", "参数(P)", "窗口(W)", "帮助(H)"];
const tabs = ["常用", "插入", "注释", "参数化", "三维工具", "渲染", "视图", "管理", "输出", "插件", "联机"];
const toggles = [["s1", "推断约束"], ["s2", "捕捉"], ["s3", "栅格", 1], ["s4", "正交"], ["s5", "极轴", 1], ["s6", "对象捕捉"], ["s7", "三维对象捕捉"], ["s8", "对象追踪"], ["s9", "动态UCS"], ["s10", "动态输入", 1], ["s11", "线宽"], ["s12", "透明度", 1], ["s13", "快捷特性"], ["s14", "选择循环"]];

export default function App() {
  return (
    <Shell lang="zh-CN">
      <GlobalStyle />
      <Header>
        <AppButton aria-label="应用程序菜单">
          <svg width="19" height="24" viewBox="0 0 19 24">
            <path d="M7 2h6l5 15-4 2-2-3-5 1-3 5-4-2z" fill="#d81f2a" />
            <path d="M0 20l4 2 3-5 5-1 2 3 4-2v2l-4 3-3-3-4 1-3 4-4-2z" fill="#7d0b11" />
            <path d="M10 7l2 6-4 .6z" fill="#4d1013" />
            <path d="M7 2h6l1 3-2-1.500z" fill="#f4636a" />
          </svg>
          <Caret c="#222" />
        </AppButton>
        <HeaderRows>
          <TitleRow>
            <TitleBox $w={313} $pl={3}>
              <TinyButton $w={18} aria-label="新建"><Icon n="newdoc" s={13} /></TinyButton>
              <TinyButton $w={18} aria-label="打开"><Icon n="open" s={13} /></TinyButton>
              <TinyButton $w={18} aria-label="保存"><Icon n="save" s={11} /></TinyButton>
              <TinyButton $w={18} aria-label="另存为"><Icon n="saveas" s={11} /></TinyButton>
              <TinyButton $w={18} aria-label="打印"><Icon n="print" s={13} /></TinyButton>
              <TinyButton $w={17} aria-label="放弃"><Icon n="undo" s={13} /></TinyButton>
              <TinyButton $w={9} aria-label="放弃列表"><Caret c="#555" s={5} /></TinyButton>
              <TinyButton $w={16} aria-label="重做"><Icon n="redo" s={13} /></TinyButton>
              <TinyButton $w={9} aria-label="重做列表"><Caret c="#555" s={5} /></TinyButton>
              <WorkspacePick>
                <Icon n="gear" s={13} />
                <PlainSelect aria-label="工作空间"><option>草图与注释</option></PlainSelect>
                <Caret s={7} />
              </WorkspacePick>
              <TinyButton $w={17} aria-label="性能"><Icon n="gauge" s={13} /></TinyButton>
              <TinyButton $w={7} aria-label="更多"><Caret c="#444" s={5} /></TinyButton>
              <TinyButton $w={12} aria-label="自定义"><Icon n="eject" s={8} /></TinyButton>
            </TitleBox>
            <TitleGap />
            <TitleBox $w={302}>
              <TinyButton $w={9} aria-label="展开"><Icon n="expand" s={8} /></TinyButton>
              <SearchInput placeholder="键入关键字或短语" aria-label="搜索" />
              <TinyButton $w={20} aria-label="查找"><Icon n="binoc" /></TinyButton>
              <TinyButton $w={14} aria-label="帐户"><Icon n="person" /></TinyButton>
              <Login>登录</Login>
              <TinyButton $w={8} aria-label="登录选项"><Caret c="#444" s={5} /></TinyButton>
              <TinyButton $w={22} aria-label="Exchange"><Icon n="exchange" /></TinyButton>
              <TinyButton $w={26} aria-label="帮助">
                <svg width="13" height="13" viewBox="0 0 16 16"><circle cx="8" cy="8" r="7" fill="#fff" stroke="#333" /><path d="M5.500 6q.3-2.500 2.600-2.500T10.500 6c0 1.500-2.400 1.600-2.400 3.600M8.100 11.300v1.700" fill="none" stroke="#2358c0" strokeWidth="1.800" /></svg>
              </TinyButton>
              <TinyButton $w={9} aria-label="帮助选项"><Caret c="#444" s={5} /></TinyButton>
            </TitleBox>
            <WindowControls>
              <TinyButton aria-label="最小化"><Icon n="min" s={9} /></TinyButton>
              <TinyButton aria-label="还原"><Icon n="restore" s={9} /></TinyButton>
              <TinyButton aria-label="关闭"><Icon n="close" s={9} /></TinyButton>
            </WindowControls>
          </TitleRow>
          <MenuBar>
            {menus.map((m) => <button key={m}>{m}</button>)}
            <MdiControls>
              <TinyButton aria-label="最小化图形"><Icon n="minBold" s={8} /></TinyButton>
              <TinyButton aria-label="还原图形"><Icon n="restoreBold" s={9} /></TinyButton>
              <TinyButton aria-label="关闭图形"><Icon n="closeBold" s={8} /></TinyButton>
            </MdiControls>
          </MenuBar>
        </HeaderRows>
      </Header>

      <TabBar>
        {tabs.map((t, i) => <RibbonTab key={t} $active={i === 0}>{t}</RibbonTab>)}
        <TabToggle aria-label="最小化功能区">
          <svg width="10" height="7" viewBox="0 0 10 7"><rect width="10" height="6" y=".5" rx="1.500" fill="#f0f0f0" /><path d="M3 4.500l2-2 2 2z" fill="#333" /></svg>
          <Caret c="#ddd" s={5} />
        </TabToggle>
      </TabBar>

      <Ribbon>
        <Panel title="绘图" w={154} pl={1}>
          <BigTool icon="line" label="直线" w={30} s={24} />
          <BigTool icon="pline" label="多段线" w={28} s={24} />
          <BigTool icon="circle" label="圆" w={30} s={24} caret />
          <BigTool icon="arc" label="圆弧" w={33} s={24} caret />
          <Stack $w={27}>
            <FrameTool icon="rect" name="矩形" w={27} caret />
            <FrameTool icon="ellipse" name="椭圆" w={27} caret />
            <FrameTool icon="hatch" name="图案填充" w={27} caret />
          </Stack>
        </Panel>
        <Panel title="修改" w={166} pl={5}>
          <Stack $w={43}>
            <SmallTool icon="move" label="移动" />
            <SmallTool icon="copy" label="复制" />
            <SmallTool icon="stretch" label="拉伸" />
          </Stack>
          <Stack $w={43}>
            <SmallTool icon="rotate" label="旋转" />
            <SmallTool icon="mirror" label="镜像" />
            <SmallTool icon="scale" label="缩放" />
          </Stack>
          <Stack $w={47}>
            <SmallTool icon="trim" label="修剪" caret />
            <SmallTool icon="fillet" label="圆角" caret />
            <SmallTool icon="array" label="阵列" caret />
          </Stack>
          <Stack $w={23} $end>
            <FrameTool icon="brush" name="删除" />
            <FrameTool icon="explode" name="分解" />
            <FrameTool icon="offset" name="偏移" />
          </Stack>
        </Panel>
        <Panel title="图层" w={156} pl={2}>
          <Stack $w={152}>
            <FramedRow>
              <FrameTool icon="layerprops" name="图层特性" />
              <FrameTool icon="layerblue" name="置为当前" />
              <div><FrameTool icon="layermatch" name="匹配" /><FrameTool icon="layerprev" name="上一个" /></div>
              <div><FrameTool icon="layeriso" name="隔离" /><FrameTool icon="layeruniso" name="取消隔离" /></div>
              <div><FrameTool icon="layerfreeze" name="冻结" /><FrameTool icon="layeroff" name="关闭" /></div>
            </FramedRow>
            <Combo>
              <PlainSelect aria-label="图层状态"><option>未保存的图层状态</option></PlainSelect>
              <Caret s={7} />
            </Combo>
            <Combo>
              <Icon n="bulb" s={13} /><Icon n="sun" s={13} /><Icon n="lock" s={13} /><Swatch $s={11} />
              <PlainSelect $indent={3} aria-label="图层"><option>0</option></PlainSelect>
              <Caret s={7} />
            </Combo>
          </Stack>
        </Panel>
        <Panel title="注释" w={87} pl={3} gap={6}>
          <BigTool letter="A" label="文字" w={30} caret />
          <Stack $w={44}>
            <SmallTool icon="linear" label="线性" caret />
            <SmallTool icon="leader" label="引线" caret />
            <SmallTool icon="table" label="表格" />
          </Stack>
        </Panel>
        <Panel title="块" w={98} pl={3} gap={4}>
          <BigTool icon="insert" label="插入" w={26} s={24} />
          <Stack $w={61}>
            <SmallTool icon="create" label="创建" />
            <SmallTool icon="editblk" label="编辑" />
            <SmallTool icon="attr" label="编辑属性" caret />
          </Stack>
        </Panel>
        <Panel title="特性" w={150} pl={3} launcher>
          <Stack $w={145}>
            <ComboRow>
              <Wheel />
              <Combo><Swatch $s={12} /><PlainSelect aria-label="颜色"><option>ByLayer</option></PlainSelect><Caret s={7} /></Combo>
            </ComboRow>
            <ComboRow>
              <Icon n="lweight" />
              <Combo><LineSample /><PlainSelect aria-label="线宽"><option>ByLayer</option></PlainSelect><Caret s={7} /></Combo>
            </ComboRow>
            <ComboRow>
              <Icon n="ltype" />
              <Combo><LineSample /><PlainSelect aria-label="线型"><option>ByLayer</option></PlainSelect><Caret s={7} /></Combo>
            </ComboRow>
          </Stack>
        </Panel>
        <Panel title="组" w={50} pl={2} gap={1}>
          <BigTool icon="group" label="组" w={28} s={26} />
          <Stack $w={17}>
            <FrameTool icon="g1" name="组编辑" />
            <FrameTool icon="g2" name="解除编组" />
            <FrameTool icon="g3" name="启用组选择" on />
          </Stack>
        </Panel>
        <Panel title="实用工具" w={55} pl={4} gap={3}>
          <BigTool icon="measure" label="测量" w={28} s={24} caret />
          <Stack $w={17}>
            <FrameTool icon="qselect" name="快速选择" />
            <FrameTool icon="selsim" name="选择类似" />
            <FrameTool icon="calc" name="计算器" />
          </Stack>
        </Panel>
        <Panel title="剪贴板" w={55} pl={5} gap={3} plain>
          <BigTool icon="paste" label="粘贴" w={28} s={24} caret />
          <Stack $w={17}>
            <FrameTool icon="cut" name="剪切" />
            <FrameTool icon="copyclip" name="复制剪裁" />
            <FrameTool icon="matchprop" name="特性匹配" />
          </Stack>
        </Panel>
      </Ribbon>

      <Workspace>
        <Drawing>
          <svg width="100%" height="100%">
            <path d={MINOR} stroke="#121217" />
            <path d={MAJOR} stroke="#20212d" />
            <path d="M265 144.500h171M473 144.500h23M490.500 139v11" stroke="#d0d0d0" />
            <g stroke="#c8c8c8" fill="none">
              <path d="M10.500 286v36M13 323.500h34" />
              <path d="M7.500 320.500h6v6h-6z" />
              <path d="M11.500 274l4.500 5 4.500-5M16 279v5" />
              <path d="M50.500 313l10 10M60.500 313l-10 10" />
            </g>
          </svg>
          <ViewLabel>[−] [俯视] [二维线框]</ViewLabel>
          <DynInput aria-label="长度" defaultValue="637.04" />
          <Tip $x={479} $y={152} $w={24} $h={15}>90</Tip>
          <Tip $x={502} $y={156} $w={80} $h={18}>指定下一点或<MenuHint>+</MenuHint></Tip>
          <svg width="900" height="200" viewBox="0 0 900 200">
            <g fill="none" stroke="#fdc50f" strokeWidth="4" strokeLinecap="round" strokeLinejoin="round">
              <path d="M834.500 8L451 144l14-29M438 139.500L516 165M442 147l10-4-8-3" />
            </g>
          </svg>
          <ViewCube>
            <span /><span>北</span><span />
            <span>西</span><CubeFace>上</CubeFace><span>东</span>
            <span /><span>南</span><span />
          </ViewCube>
          <Wcs>WCS<Caret c="#6c6c78" /></Wcs>
          <NavBar>
            <svg width="24" height="156" viewBox="0 0 24 156" fill="none" stroke="#2a2a2a" strokeWidth="1.200">
              <circle cx="19" cy="4.500" r="2" />
              <circle cx="12" cy="22" r="8" /><circle cx="12" cy="22" r="4.500" /><path d="M12 14h8v8" />
              <path d="M10.500 36h3l-1.500 2zM10.500 87h3l-1.500 2zM10.500 115h3l-1.500 2z" fill="#222" />
              <path d="M8 61l-4-6q0-2 2-1l2 3-1-9q1-2 2 0l1 6 .500-8q1.500-2 2 0v8l1.500-7q1.500-1 2 0l-1 9 2-3q2-1 2 .5l-5 8z" />
              <path d="M4 67l12 12M16 67L4 79M4 71v-4h4M12 67h4v4M4 75v4h4" /><circle cx="16" cy="78" r="3" /><path d="M18 80l3 3" strokeWidth="2" />
              <path d="M12 94v16M10 97l2-3 2 3" /><ellipse cx="12" cy="102" rx="7" ry="3.500" /><path d="M16 104l3 1-1-3" />
              <path d="M3.500 124.500h4v4h-4zM10 124.500h4v4h-4zM16 124.500h4v4h-4zM3.500 131.500h12v8h-12z" /><path d="M8 133.500l4 2-4 2z" fill="#222" />
              <circle cx="19" cy="151" r="2" />
            </svg>
          </NavBar>
        </Drawing>
        <VScroll>
          <ScrollButton aria-label="向上"><Icon n="chevU" s={7} /></ScrollButton>
          <VThumb />
          <ScrollButton aria-label="向下"><Icon n="chevD" s={7} /></ScrollButton>
        </VScroll>
      </Workspace>

      <LayoutBar>
        <LayoutNav aria-label="第一个"><Icon n="first" s={9} /></LayoutNav>
        <LayoutNav aria-label="前一个"><Icon n="prev" s={8} /></LayoutNav>
        <LayoutNav aria-label="后一个"><Icon n="next" s={8} /></LayoutNav>
        <LayoutNav aria-label="最后"><Icon n="last" s={9} /></LayoutNav>
        <LayoutTab $active>
          <svg width="34" height="13" viewBox="0 0 34 13"><path d="M1 0h32l-5 13H6z" fill="#000" /></svg>
          <span>模型</span>
        </LayoutTab>
        <LayoutTab>
          <svg width="34" height="13" viewBox="0 0 34 13"><path d="M33 0l-5 13" stroke="#444" /></svg>
          <span>布局1</span>
        </LayoutTab>
        <LayoutTab>
          <svg width="34" height="13" viewBox="0 0 34 13"><path d="M33 0l-5 13" stroke="#444" /></svg>
          <span>布局2</span>
        </LayoutTab>
        <HScroll>
          <Splitter />
          <ScrollButton aria-label="向左"><Icon n="chevL" s={7} /></ScrollButton>
          <HThumb />
          <ScrollButton aria-label="向右"><Icon n="chevR" s={7} /></ScrollButton>
        </HScroll>
      </LayoutBar>

      <Command>
        <Grip />
        <History>
          <Line>指定下一点或<Code> [</Code>放弃<Code>(U)]:</Code></Line>
          <Line>指定下一点或<Code> [</Code>闭合<Code>(C)/</Code>放弃<Code>(U)]: _u</Code></Line>
        </History>
        <Prompt><Line as="span">指定下一点或<Code> [</Code>放弃<Code>(U)]:</Code></Line><PromptInput /></Prompt>
      </Command>

      <Status>
        <Coords>2761.3479, 1289.5190, 0.0000</Coords>
        {toggles.map(([n, name, on]) => <StatusToggle key={n} $on={on} aria-label={name}><Icon n={n} /></StatusToggle>)}
        <ModelButtons>
          <ModelButton $w={22}>模型</ModelButton>
          <ModelButton $w={16} aria-label="快速查看布局"><svg width="12" height="12" viewBox="0 0 12 12"><path d="M2 2h8v8H2zM6 2v4h4" fill="#ddd" stroke="#555" /></svg></ModelButton>
        </ModelButtons>
      </Status>

      <Taskbar>
        <Start aria-label="开始"><Icon n="win" s={12} /></Start>
        <TaskSearch>
          <Icon n="ring" s={18} />
          <TaskSearchInput placeholder="在这里输入你要搜索的内容" />
          <Icon n="mic" s={14} />
        </TaskSearch>
        <TaskApps>
          <TaskApp aria-label="视频"><Icon n="clap" s={18} /></TaskApp>
          <TaskApp aria-label="浏览器"><Icon n="pin" s={18} /></TaskApp>
          <TaskApp $active aria-label="AutoCAD"><Icon n="cad" s={18} /></TaskApp>
          <TaskApp aria-label="画图"><Icon n="paint" s={18} /></TaskApp>
        </TaskApps>
      </Taskbar>

      <FaintMark $w={234} $b={49} $font={'700 39px/36px "Liberation Sans", sans-serif'}>Ba</FaintMark>
      <FaintMark $w={234} $b={18} $font={'400 22px/36px "Open Sans", sans-serif'}>jing</FaintMark>
      <Paw width="32" height="18" viewBox="0 0 32 18"><ellipse cx="8" cy="10" rx="6" ry="8" fill="#eee" stroke="#bbb" /><ellipse cx="24" cy="11" rx="6" ry="8" fill="#eee" stroke="#bbb" /></Paw>
      <Brand>
        <svg width="43" height="60" viewBox="0 0 43 60" fill="#d0cfcd">
          <path d="M2 7l4 2 4 0 3 2 4 4.500-1 1.500-3 .5 0 4c1 5 3 8 7 8.500 5 .5 8 0 12 2.500l5 4 .5 4-1.500-2-1 3-1.500 2c0 5 2 9 3.500 13l-3.500.5-1.500-6-3.500-7-2-2.500-5 1-7-2-3.500 5.500-1.500 11.500H5.500l1.500-5-.5-8-4-7C0 29 1 24 4 20l1.500-5-.5-3z" />
          <path d="M11 9C19 6 20 10 29 8c6-1 10-3 12-6M13 8l-1-5M16 7.500l1-6M21 7.500L19 3l4-3M27 6.500L20 4M33 5l-5-3" fill="none" stroke="#d0cfcd" strokeWidth="1.300" />
        </svg>
        <BrandText>
          <BrandName><BrandLatin>3D</BrandLatin>溜溜网</BrandName>
          <BrandUrl>3D66.COM</BrandUrl>
        </BrandText>
      </Brand>
    </Shell>
  );
}
